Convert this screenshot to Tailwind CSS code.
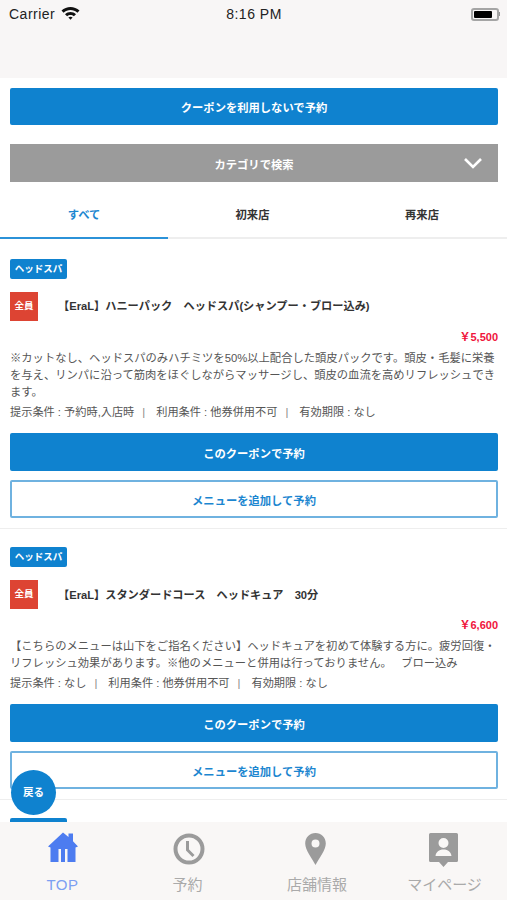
<!DOCTYPE html>
<html lang="ja">
<head>
  <meta charset="UTF-8">
  <meta name="viewport" content="width=device-width, initial-scale=1">
  <title>クーポン</title>
  <script src="https://cdn.jsdelivr.net/npm/@tailwindcss/browser@4"></script>
</head>
<body class="bg-white text-[#333] font-['Liberation_Sans','Noto_Sans_CJK_JP',sans-serif]">
<div class="relative h-[900px] overflow-hidden">

  <!-- Status bar + header -->
  <header class="h-[78px] bg-[#f8f6f6]">
    <div class="relative flex h-[28px] items-center justify-between pl-[9px] pr-[7px] text-[#222]">
      <div class="flex items-center gap-[6px] text-[14px]">
        <span class="tracking-[0.5px]">Carrier</span>
        <svg width="19" height="14" viewBox="0 0 19 14" class="mb-[3px]">
          <path d="M0.5 4.6C5.4 -0.3 13.6 -0.3 18.5 4.6L16.4 6.8C12.6 3 6.4 3 2.6 6.8Z" fill="#111"/>
          <path d="M4 8.2C7 5.2 12 5.2 15 8.2L12.9 10.3C11 8.5 8 8.5 6.1 10.3Z" fill="#111"/>
          <path d="M7.4 11.5C8.5 10.5 10.5 10.5 11.6 11.5L9.5 13.7Z" fill="#111"/>
        </svg>
      </div>
      <span class="absolute left-[1px] right-0 text-center text-[14px] tracking-[0.5px]">8:16 PM</span>
      <div class="flex items-center">
        <div class="flex h-[13px] w-[28px] items-center rounded-[3px] border-2 border-[#a5a5a5] p-[1px]">
          <div class="h-full w-[18px] rounded-[1px] bg-black"></div>
        </div>
        <div class="h-[4px] w-[1.5px] bg-[#999]"></div>
      </div>
    </div>
  </header>

  <main class="pl-[10px] pr-[9px] pt-[10px]">
    <button class="flex h-[37px] w-full items-center justify-center rounded-[2px] bg-[#0f82cf] pt-[4px] text-[11.3px] font-bold text-white">クーポンを利用しないで予約</button>
    <div class="relative mt-[19px] flex h-[38px] items-center justify-center bg-[#9b9b9b] pt-[5px] text-[11.3px] font-bold text-white">
      カテゴリで検索
      <svg width="18" height="11" viewBox="0 0 18 11" class="absolute right-[16px] top-[14px]" fill="none" stroke="white" stroke-width="2.6">
        <path d="M1 1L9 9L17 1"/>
      </svg>
    </div>
  </main>

  <!-- Tabs -->
  <nav class="grid h-[57px] grid-cols-[168px_169px_1fr] border-b-2 border-[#eeeeee] text-[11.3px] font-bold">
    <div class="-mb-[2px] flex items-center justify-center border-b-2 border-[#2b92d8] pt-[12px] text-[#1c86d0]">すべて</div>
    <div class="flex items-center justify-center pt-[12px] text-[#333]">初来店</div>
    <div class="flex items-center justify-center pt-[12px] text-[#333]">再来店</div>
  </nav>

  <!-- Coupon 1 -->
  <section class="border-b border-[#eeeeee] pb-[10px] pl-[10px] pr-[9px] pt-[20px]">
    <span class="flex h-[20px] w-[57px] items-center justify-center rounded-[2px] bg-[#0f82cf] text-[9.5px] font-bold text-white">ヘッドスパ</span>
    <div class="mt-[13px] flex items-center">
      <span class="flex h-[29px] w-[28px] items-center justify-center bg-[#dd4433] text-[9.5px] font-bold text-white">全員</span>
      <h2 class="ml-[20px] text-[11.2px] font-bold text-[#333]">【EraL】ハニーパック　ヘッドスパ(シャンプー・ブロー込み)</h2>
    </div>
    <p class="mt-[8px] text-right text-[11px] leading-[16px] font-bold text-[#f0143c]">￥5,500</p>
    <p class="mt-[5px] text-[11.3px] leading-[17px] text-[#555]">※カットなし、ヘッドスパのみハチミツを50%以上配合した頭皮パックです。頭皮・毛髪に栄養を与え、リンパに沿って筋肉をほぐしながらマッサージし、頭皮の血流を高めリフレッシュできます。</p>
    <p class="mt-[3px] text-[11.2px] leading-[17px] text-[#555]">提示条件 : 予約時,入店時<span class="ml-[8px] mr-[11px] text-[#888]">|</span>利用条件 : 他券併用不可<span class="ml-[8px] mr-[11px] text-[#888]">|</span>有効期限 : なし</p>
    <button class="mt-[12px] flex h-[38px] w-full items-center justify-center rounded-[2px] bg-[#0f82cf] pt-[4px] text-[11.3px] font-bold text-white">このクーポンで予約</button>
    <button class="mt-[9px] flex h-[38px] w-full items-center justify-center rounded-[2px] border-2 border-[#6fb2e0] bg-white pt-[4px] text-[11.3px] font-bold text-[#1c86d0]">メニューを追加して予約</button>
  </section>

  <!-- Coupon 2 -->
  <section class="border-b border-[#eeeeee] pb-[10px] pl-[10px] pr-[9px] pt-[18px]">
    <span class="flex h-[20px] w-[57px] items-center justify-center rounded-[2px] bg-[#0f82cf] text-[9.5px] font-bold text-white">ヘッドスパ</span>
    <div class="mt-[13px] flex items-center">
      <span class="flex h-[29px] w-[28px] items-center justify-center bg-[#dd4433] text-[9.5px] font-bold text-white">全員</span>
      <h2 class="ml-[20px] pt-[1px] text-[11.2px] font-bold text-[#333]">【EraL】スタンダードコース　ヘッドキュア　30分</h2>
    </div>
    <p class="mt-[8px] text-right text-[11px] leading-[16px] font-bold text-[#f0143c]">￥6,600</p>
    <p class="mt-[5px] text-[11.3px] leading-[17px] text-[#555]">【こちらのメニューは山下をご指名ください】ヘッドキュアを初めて体験する方に。疲労回復・リフレッシュ効果があります。※他のメニューと併用は行っておりません。&nbsp;&nbsp;&nbsp;ブロー込み</p>
    <p class="mt-[3px] text-[11.2px] leading-[17px] text-[#555]">提示条件 : なし<span class="ml-[8px] mr-[11px] text-[#888]">|</span>利用条件 : 他券併用不可<span class="ml-[8px] mr-[11px] text-[#888]">|</span>有効期限 : なし</p>
    <button class="mt-[12px] flex h-[38px] w-full items-center justify-center rounded-[2px] bg-[#0f82cf] pt-[4px] text-[11.3px] font-bold text-white">このクーポンで予約</button>
    <button class="mt-[9px] flex h-[38px] w-full items-center justify-center rounded-[2px] border-2 border-[#6fb2e0] bg-white pt-[4px] text-[11.3px] font-bold text-[#1c86d0]">メニューを追加して予約</button>
  </section>

  <!-- Next coupon tag, cut off by the tab bar -->
  <div class="px-[10px] pt-[18px]">
    <span class="block h-[20px] w-[57px] rounded-[2px] bg-[#0f82cf]"></span>
  </div>

  <!-- Floating back button -->
  <button class="absolute left-[11px] top-[770px] flex h-[45px] w-[45px] items-center justify-center rounded-full bg-[#0f82cf] pt-[1px] text-[10.5px] font-bold text-white">戻る</button>

  <!-- Tab bar -->
  <footer class="absolute bottom-0 left-0 right-0 grid h-[78px] grid-cols-[125px_127px_127px_128px] bg-[#f9f7f6] text-center text-[15px] text-[#aaaaaa]">
    <div class="flex flex-col items-center">
      <svg width="30" height="30" viewBox="0 0 30 30" class="mt-[10px]" fill="#4d7cf0">
        <path d="M15 0.5L20.5 5V1.5H25V9.2L30 14.5L27.5 15.5V30H19.5V17H17V30H13V17H10.5V30H2.5V15.5L0 14.5Z"/>
      </svg>
      <span class="mt-[13px] leading-[20px] tracking-[0.5px] text-[#7d9ff2]">TOP</span>
    </div>
    <div class="flex flex-col items-center">
      <svg width="32" height="32" viewBox="0 0 32 32" class="mt-[11px]" fill="none" stroke="#9b9b9b">
        <circle cx="16" cy="16" r="13.5" stroke-width="4"/>
        <path d="M14.5 8V17L20.5 23" stroke-width="3"/>
      </svg>
      <span class="mr-[2px] mt-[10px] leading-[20px]">予約</span>
    </div>
    <div class="flex flex-col items-center">
      <svg width="21" height="32" viewBox="0 0 21 32" class="mt-[11px]">
        <path fill-rule="evenodd" fill="#9b9b9b" d="M10.5 0C4.7 0 0.2 4.6 0.2 10.4C0.2 17 7 25 10.5 32C14 25 20.8 17 20.8 10.4C20.8 4.6 16.3 0 10.5 0ZM10.5 6.5A4 4 0 1 1 10.5 14.5A4 4 0 1 1 10.5 6.5Z"/>
      </svg>
      <span class="ml-[3px] mt-[10px] leading-[20px]">店舗情報</span>
    </div>
    <div class="flex flex-col items-center">
      <svg width="29" height="34" viewBox="0 0 29 34" class="mt-[11px]">
        <path fill-rule="evenodd" fill="#9b9b9b" d="M1.5 0H27.5Q29 0 29 1.5V27.5Q29 29 27.5 29H19L14.5 34L10 29H1.5Q0 29 0 27.5V1.5Q0 0 1.5 0ZM14.5 5A5 5 0 1 0 14.5 15A5 5 0 1 0 14.5 5ZM14.5 16.5C10 16.5 7 19 6.5 23H22.5C22 19 19 16.5 14.5 16.5Z"/>
      </svg>
      <span class="ml-[3px] mt-[8px] leading-[20px]">マイページ</span>
    </div>
  </footer>
</div>
</body>
</html>
